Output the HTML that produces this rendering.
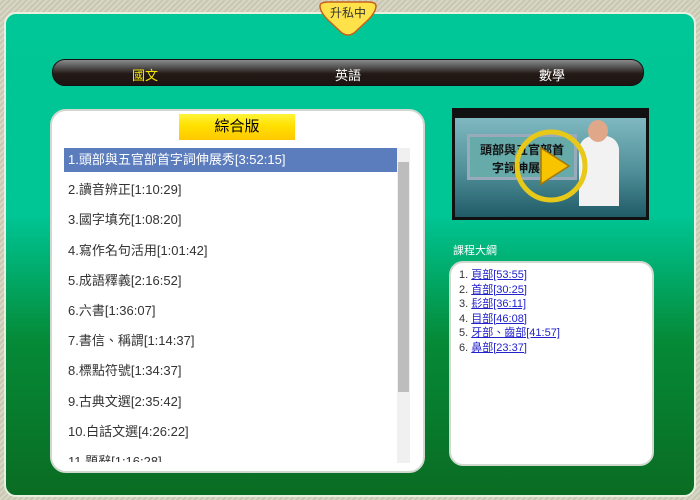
<!DOCTYPE html>
<html><head><meta charset="utf-8"><style>
*{margin:0;padding:0;box-sizing:border-box}
body{width:700px;height:500px;overflow:hidden;position:relative;font-family:"Liberation Sans","Noto Sans CJK TC",sans-serif;
background:repeating-linear-gradient(135deg,#d8d6c4 0 2px,#c9c7b2 2px 4px);}
.panel{position:absolute;left:4px;top:12px;width:692px;height:485px;border-radius:12px;border:2px solid #e8f0e0;
background:linear-gradient(#00c797 0%,#00c594 42%,#01a866 55%,#058a37 68%,#0a6c22 100%);}
.badge{position:absolute;left:316px;top:0px;width:64px;height:37px;}
.nav{position:absolute;left:52px;top:59px;width:592px;height:27px;border-radius:13px;
background:linear-gradient(#8a8a8a 0%,#5a5a5a 25%,#231a16 55%,#1d1512 100%);border:1px solid #111;}
.nav span{position:absolute;top:5px;font-size:13px;color:#fff}
.box{position:absolute;left:50px;top:109px;width:375px;height:364px;background:#fff;border-radius:16px;border:2px solid #d0d8d0;}
.tab{position:absolute;left:179px;top:114px;width:116px;height:26px;background:linear-gradient(#fff43a 0%,#ffe000 45%,#ffc800 100%);
font-size:15px;text-align:center;line-height:26px;color:#000}
.list{position:absolute;left:64px;top:148px;width:333px}
.list div{height:30.2px;line-height:24px;font-size:13px;color:#333;padding-left:4px;white-space:nowrap}
.list .sel{background:#5b7dbd;color:#fff;height:24px;margin-bottom:6.2px}
.sb{position:absolute;left:397px;top:148px;width:13px;height:315px;background:#f0f0f0}
.th{position:absolute;left:398px;top:162px;width:11px;height:230px;background:#bdbdbd}
.video{position:absolute;left:452px;top:108px;width:197px;height:112px;background:#111;}
.scr{position:absolute;left:3px;top:10px;width:191px;height:99px;background:linear-gradient(#7fb8c0,#4f8e98 55%,#1f5b66);}
.ol{position:absolute;left:453px;top:242px;font-size:11px;color:#fff}
.obox{position:absolute;left:449px;top:261px;width:205px;height:205px;background:#fff;border-radius:14px;border:2px solid #d0d8d0;padding:5px 0 0 8px;font-size:11px;line-height:14.5px;color:#333}
.obox a{color:#2222cc;text-decoration:underline}
</style></head><body>
<div class="panel"></div>
<svg class="badge" viewBox="0 0 64 37"><path d="M4 6 Q4 2 12 2 H52 Q60 2 60 6 Q60 12 52 20 L38 33 Q32 37 26 33 L12 20 Q4 12 4 6Z" fill="#ffe24a" stroke="#c8621a" stroke-width="1.5"/><text x="32" y="17" font-size="12" text-anchor="middle" fill="#333" font-family="Noto Sans CJK TC,sans-serif">升私中</text></svg>
<div class="nav"><span style="left:79px;color:#f4e800">國文</span><span style="left:282px">英語</span><span style="left:486px">數學</span></div>
<div class="box"></div>
<div class="tab">綜合版</div>
<div class="list">
<div class="sel">1.頭部與五官部首字詞伸展秀[3:52:15]</div>
<div>2.讀音辨正[1:10:29]</div>
<div>3.國字填充[1:08:20]</div>
<div>4.寫作名句活用[1:01:42]</div>
<div>5.成語釋義[2:16:52]</div>
<div>6.六書[1:36:07]</div>
<div>7.書信、稱謂[1:14:37]</div>
<div>8.標點符號[1:34:37]</div>
<div>9.古典文選[2:35:42]</div>
<div>10.白話文選[4:26:22]</div>
<div style="height:12px;overflow:hidden;line-height:24px">11.題辭[1:16:28]</div>
</div>
<div class="sb"></div><div class="th"></div>
<div class="video"><div class="scr">
<div style="position:absolute;left:12px;top:16px;width:110px;height:46px;border:3px solid #9ab;background:#6aa;color:#111;font-size:12px;text-align:center;line-height:18px;padding-top:4px;font-weight:bold">頭部與五官部首<br>字詞伸展秀</div>
<div style="position:absolute;left:124px;top:18px;width:40px;height:70px;background:#f2f2f2;border-radius:14px 14px 0 0"></div>
<div style="position:absolute;left:133px;top:2px;width:20px;height:22px;background:#e0a888;border-radius:50%"></div>
<svg style="position:absolute;left:56px;top:8px" width="80" height="80" viewBox="0 0 80 80"><circle cx="40" cy="40" r="34" fill="none" stroke="#e8c818" stroke-width="5"/><path d="M30 22 L58 40 L30 58Z" fill="#f8c400" stroke="#a87800" stroke-width="1.5"/></svg>
</div></div>
<div class="ol">課程大綱</div>
<div class="obox">
1. <a>頁部[53:55]</a><br>2. <a>首部[30:25]</a><br>3. <a>髟部[36:11]</a><br>4. <a>目部[46:08]</a><br>5. <a>牙部、齒部[41:57]</a><br>6. <a>鼻部[23:37]</a>
</div>
</body></html>
